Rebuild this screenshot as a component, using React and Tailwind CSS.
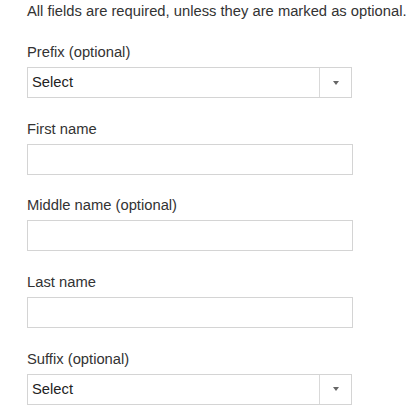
const fields = [
  { label: 'Prefix (optional)', type: 'select' },
  { label: 'First name', type: 'input' },
  { label: 'Middle name (optional)', type: 'input' },
  { label: 'Last name', type: 'input' },
  { label: 'Suffix (optional)', type: 'select' },
];

function SelectBox() {
  return (
    <div className="flex h-[31px] w-[325px] border border-[#d4d4d4] bg-white">
      <div className="flex flex-1 items-center pl-[4px] text-[#222]">Select</div>
      <div className="flex w-[32px] items-center justify-center border-l border-[#d9d9d9]">
        <svg width="6" height="4" viewBox="0 0 6 4">
          <path d="M0 0 L6 0 L3 4 Z" fill="#666" />
        </svg>
      </div>
    </div>
  );
}

export default function App() {
  return (
    <div className="min-h-screen bg-white pl-[27px] pt-[3px] text-[14.75px] text-[#333]" style={{ fontFamily: '"Liberation Sans", Arial, sans-serif' }}>
      <p className="leading-[17px]">All fields are required, unless they are marked as optional.</p>
      <div className="mt-[24px] flex flex-col gap-[22.7px]">
        {fields.map((f) => (
          <div key={f.label}>
            <label className="block leading-[17px]">{f.label}</label>
            <div className="mt-[6px]">
              {f.type === 'select' ? (
                <SelectBox />
              ) : (
                <div className="h-[31px] w-[326px] border border-[#d4d4d4] bg-white" />
              )}
            </div>
          </div>
        ))}
      </div>
    </div>
  );
}
